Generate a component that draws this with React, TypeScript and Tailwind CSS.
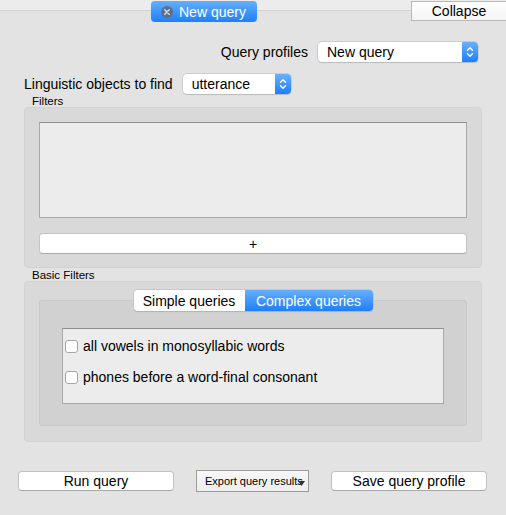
import React from "react";

function Stepper() {
  return (
    <div className="w-[16px] h-full rounded-r-[4px] bg-[linear-gradient(#6ab1fb,#1b7ffa)] flex items-center justify-center">
      <svg width="8" height="12" viewBox="0 0 8 12" fill="none" stroke="white" strokeWidth="1.4" strokeLinecap="round" strokeLinejoin="round">
        <path d="M1.5 4.2 L4 1.8 L6.5 4.2" />
        <path d="M1.5 7.8 L4 10.2 L6.5 7.8" />
      </svg>
    </div>
  );
}

function Select({ value, width }: { value: string; width: string }) {
  return (
    <div className={`${width} h-[20px] flex rounded-[4px] bg-white shadow-[0_0_0_0.5px_#b5b5b5,0_1px_1px_rgba(0,0,0,0.15)]`}>
      <div className="flex-1 pl-[9px] leading-[20px] text-[14px]">{value}</div>
      <Stepper />
    </div>
  );
}

function Button({ label, width }: { label: string; width: string }) {
  return (
    <div className={`${width} h-[20px] rounded-[4px] bg-white border border-[#c2c2c2] border-b-[#a8a8a8] flex items-center justify-center text-[14px]`}>
      {label}
    </div>
  );
}

function Checkbox({ label }: { label: string }) {
  return (
    <div className="flex items-center h-[14px]">
      <div className="w-[13px] h-[13px] ml-[2px] rounded-[3px] bg-white border border-[#a6a6a6]" />
      <span className="ml-[5px] text-[14px]">{label}</span>
    </div>
  );
}

export default function App() {
  return (
    <div className="w-[506px] h-[515px] bg-[#e3e3e3] font-['Liberation_Sans',Arial,sans-serif] text-black leading-[20px] overflow-hidden">
      <div className="h-[11px] bg-[#ececec] border-b border-[#d2d2d2]" />
      <div className="-mt-[11px] flex items-start h-[23px]">
        <div className="ml-[151px] mt-[1px] w-[106px] h-[21px] rounded-[4px] bg-[linear-gradient(#66aefb,#1d80fa)] flex items-center">
          <svg className="ml-[10px]" width="12" height="12" viewBox="0 0 12 12">
            <circle cx="6" cy="6" r="6" fill="#5f6f85" />
            <path d="M3.8 3.8 L8.2 8.2 M8.2 3.8 L3.8 8.2" stroke="#d6dbe3" strokeWidth="1.5" strokeLinecap="round" />
          </svg>
          <span className="ml-[6px] text-white text-[14px]">New query</span>
        </div>
        <div className="ml-auto mt-[1px] w-[95px] h-[20px] bg-[linear-gradient(#ffffff,#f4f4f4)] border border-[#b9b9b9] border-r-0 flex items-center justify-center text-[14px]">
          Collapse
        </div>
      </div>

      <div className="mt-[19px] flex items-center justify-end pr-[28px]">
        <span className="text-[14px] mr-[10px]">Query profiles</span>
        <Select value="New query" width="w-[160px]" />
      </div>

      <div className="mt-[12px] flex items-center pl-[24px]">
        <span className="text-[14px] mr-[10px]">Linguistic objects to find</span>
        <Select value="utterance" width="w-[108px]" />
      </div>

      <div className="mt-[1px] pl-[32px] text-[11.5px] leading-[12px]">Filters</div>
      <div className="mx-[24px] h-[161px] rounded-[4px] bg-[#d9d9d9] border border-[#d3d3d3] px-[14px] pt-[14px]">
        <div className="h-[96px] bg-[#ececec] border border-[#a9a9a9] border-t-[#8e8e8e]" />
        <div className="mt-[15px] h-[21px] rounded-[4px] bg-white border border-[#c4c4c4] border-b-[#a8a8a8] flex items-center justify-center text-[14px] leading-none">
          +
        </div>
      </div>

      <div className="mt-[1px] pl-[32px] text-[11.5px] leading-[12px]">Basic Filters</div>
      <div className="mx-[24px] h-[161px] rounded-[4px] bg-[#d9d9d9] border border-[#d3d3d3] px-[14px] pt-[8px]">
        <div className="relative z-10 flex justify-center">
          <div className="flex h-[21px] rounded-[4px] overflow-hidden shadow-[0_0_0_0.5px_#b5b5b5,0_1px_1px_rgba(0,0,0,0.15)] text-[14px]">
            <div className="w-[111px] bg-white flex items-center justify-center">Simple queries</div>
            <div className="w-[128px] bg-[linear-gradient(#66aefb,#1d80fa)] text-white flex items-center justify-center">Complex queries</div>
          </div>
        </div>
        <div className="-mt-[11px] h-[126px] rounded-[3px] bg-[#d1d1d1] border border-[#cacaca] px-[22px] pt-[27px]">
          <div className="h-[76px] bg-[#ececec] border border-[#a9a9a9] border-t-[#8e8e8e] pt-[10px] flex flex-col gap-[17px]">
            <Checkbox label="all vowels in monosyllabic words" />
            <Checkbox label="phones before a word-final consonant" />
          </div>
        </div>
      </div>

      <div className="mt-[28px] flex items-center">
        <div className="ml-[18px]">
          <Button label="Run query" width="w-[156px]" />
        </div>
        <div className="ml-[22px] w-[113px] h-[22px] bg-[linear-gradient(#f7f7f7,#ededed)] border border-[#9c9c9c] flex items-center pl-[8px] text-[11px] relative">
          Export query results
          <svg className="absolute right-[3px] top-[10px]" width="7" height="5" viewBox="0 0 7 5">
            <path d="M0 0 L7 0 L3.5 5 Z" fill="#333" />
          </svg>
        </div>
        <div className="ml-[22px]">
          <Button label="Save query profile" width="w-[156px]" />
        </div>
      </div>
    </div>
  );
}
